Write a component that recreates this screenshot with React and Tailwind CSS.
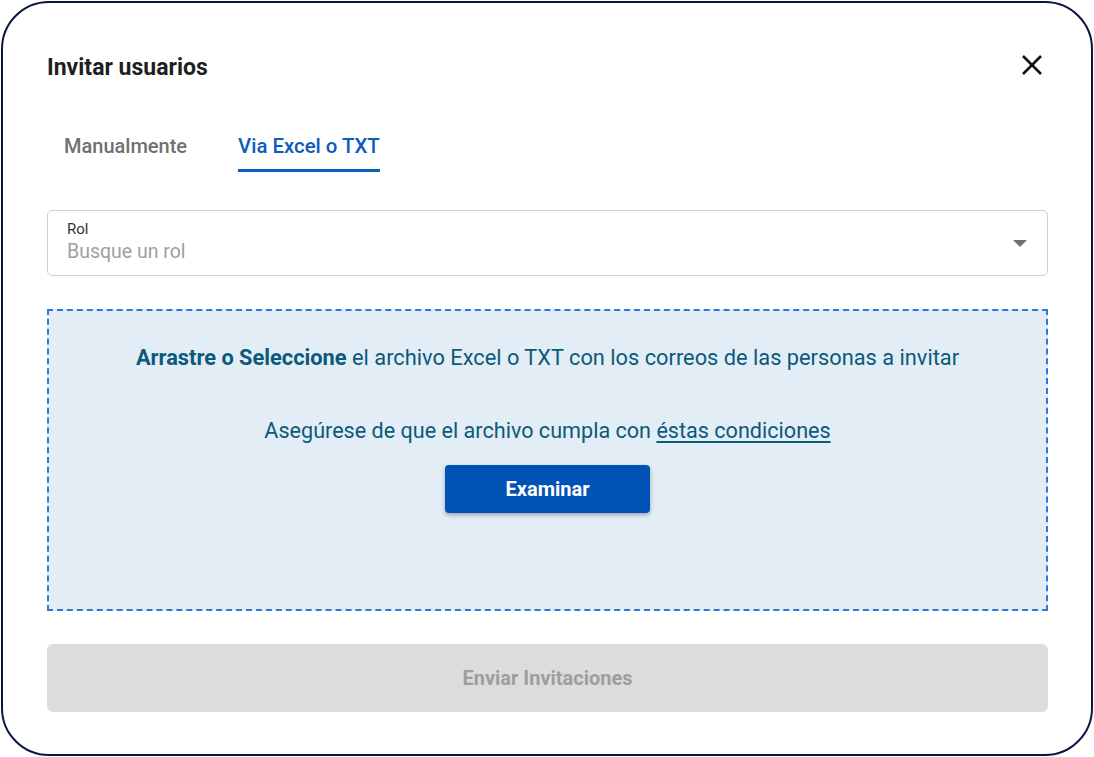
import React, { useState } from 'react';

export default function App() {
  const [tab, setTab] = useState('excel');

  return (
    <div className="w-[1094px] h-[757px] bg-white p-px" style={{ fontFamily: 'Roboto, "Noto Sans", sans-serif' }}>
      <div className="h-[755px] w-[1092px] border-2 border-[#0b1640] rounded-[48px] bg-white pl-[44px] pr-[43px] pt-[49px]">
        {/* Cabecera */}
        <div className="flex items-center justify-between h-[32px]">
          <h2 className="text-[23px] font-bold text-[#1f1f1f] leading-[32px]">Invitar usuarios</h2>
          <button className="mr-[4px] mb-[6px] text-[#111]">
            <svg width="24" height="24" viewBox="0 0 24 24" fill="none" stroke="currentColor" strokeWidth="2.6" strokeLinecap="butt">
              <path d="M3 3L21 21M21 3L3 21" />
            </svg>
          </button>
        </div>

        {/* Pestañas */}
        <div className="flex gap-[51px] pl-[17px] mt-[48px]">
          <button onClick={() => setTab('manual')} className={`h-[40px] pb-[9px] leading-[28px] text-[20px] font-medium border-b-[3px] ${tab === 'manual' ? 'text-[#0a5cbd] border-[#0a5cbd]' : 'text-[#707070] border-transparent'}`}>
            Manualmente
          </button>
          <button onClick={() => setTab('excel')} className={`h-[40px] pb-[9px] leading-[28px] text-[20.4px] font-medium border-b-[3px] ${tab === 'excel' ? 'text-[#0a5cbd] border-[#0a5cbd]' : 'text-[#707070] border-transparent'}`}>
            Via Excel o TXT
          </button>
        </div>

        {/* Rol */}
        <div className="mt-[38px] h-[66px] border border-[#cfcfcf] rounded-[5px] flex items-start justify-between pl-[19px] pr-[20px] pt-[9px]">
          <div className="flex flex-col">
            <span className="text-[15px] text-[#333] leading-[18px]">Rol</span>
            <span className="mt-[2px] text-[19.5px] text-[#a0a0a0] leading-[24px]">Busque un rol</span>
          </div>
          <svg className="mt-[20px]" width="14" height="8" viewBox="0 0 14 8"><path d="M0 0H14L7 7Z" fill="#6f6f6f" /></svg>
        </div>

        {/* Zona de carga */}
        <div className="mt-[33px] h-[302px] border-2 border-dashed border-[#2a7ad6] bg-[#e3edf5] flex flex-col items-center text-[#0b5a7a] text-[21.6px] leading-[28px]">
          <p className="mt-[33px] text-[21.8px]"><span className="font-bold">Arrastre o Seleccione</span> el archivo Excel o TXT con los correos de las personas a invitar</p>
          <p className="mt-[45px]">Asegúrese de que el archivo cumpla con <a className="underline underline-offset-[3px]">éstas condiciones</a></p>
          <button className="mt-[20px] w-[205px] h-[48px] bg-[#0052b5] rounded-[4px] text-white font-bold text-[20px] shadow-[0_2px_4px_rgba(0,0,0,0.3)]">
            Examinar
          </button>
        </div>

        {/* Enviar */}
        <button className="mt-[33px] w-full h-[68px] bg-[#dcdcdc] rounded-[6px] text-[#9e9e9e] font-bold text-[20px] leading-[26px]">
          Enviar Invitaciones
        </button>
      </div>
    </div>
  );
}
